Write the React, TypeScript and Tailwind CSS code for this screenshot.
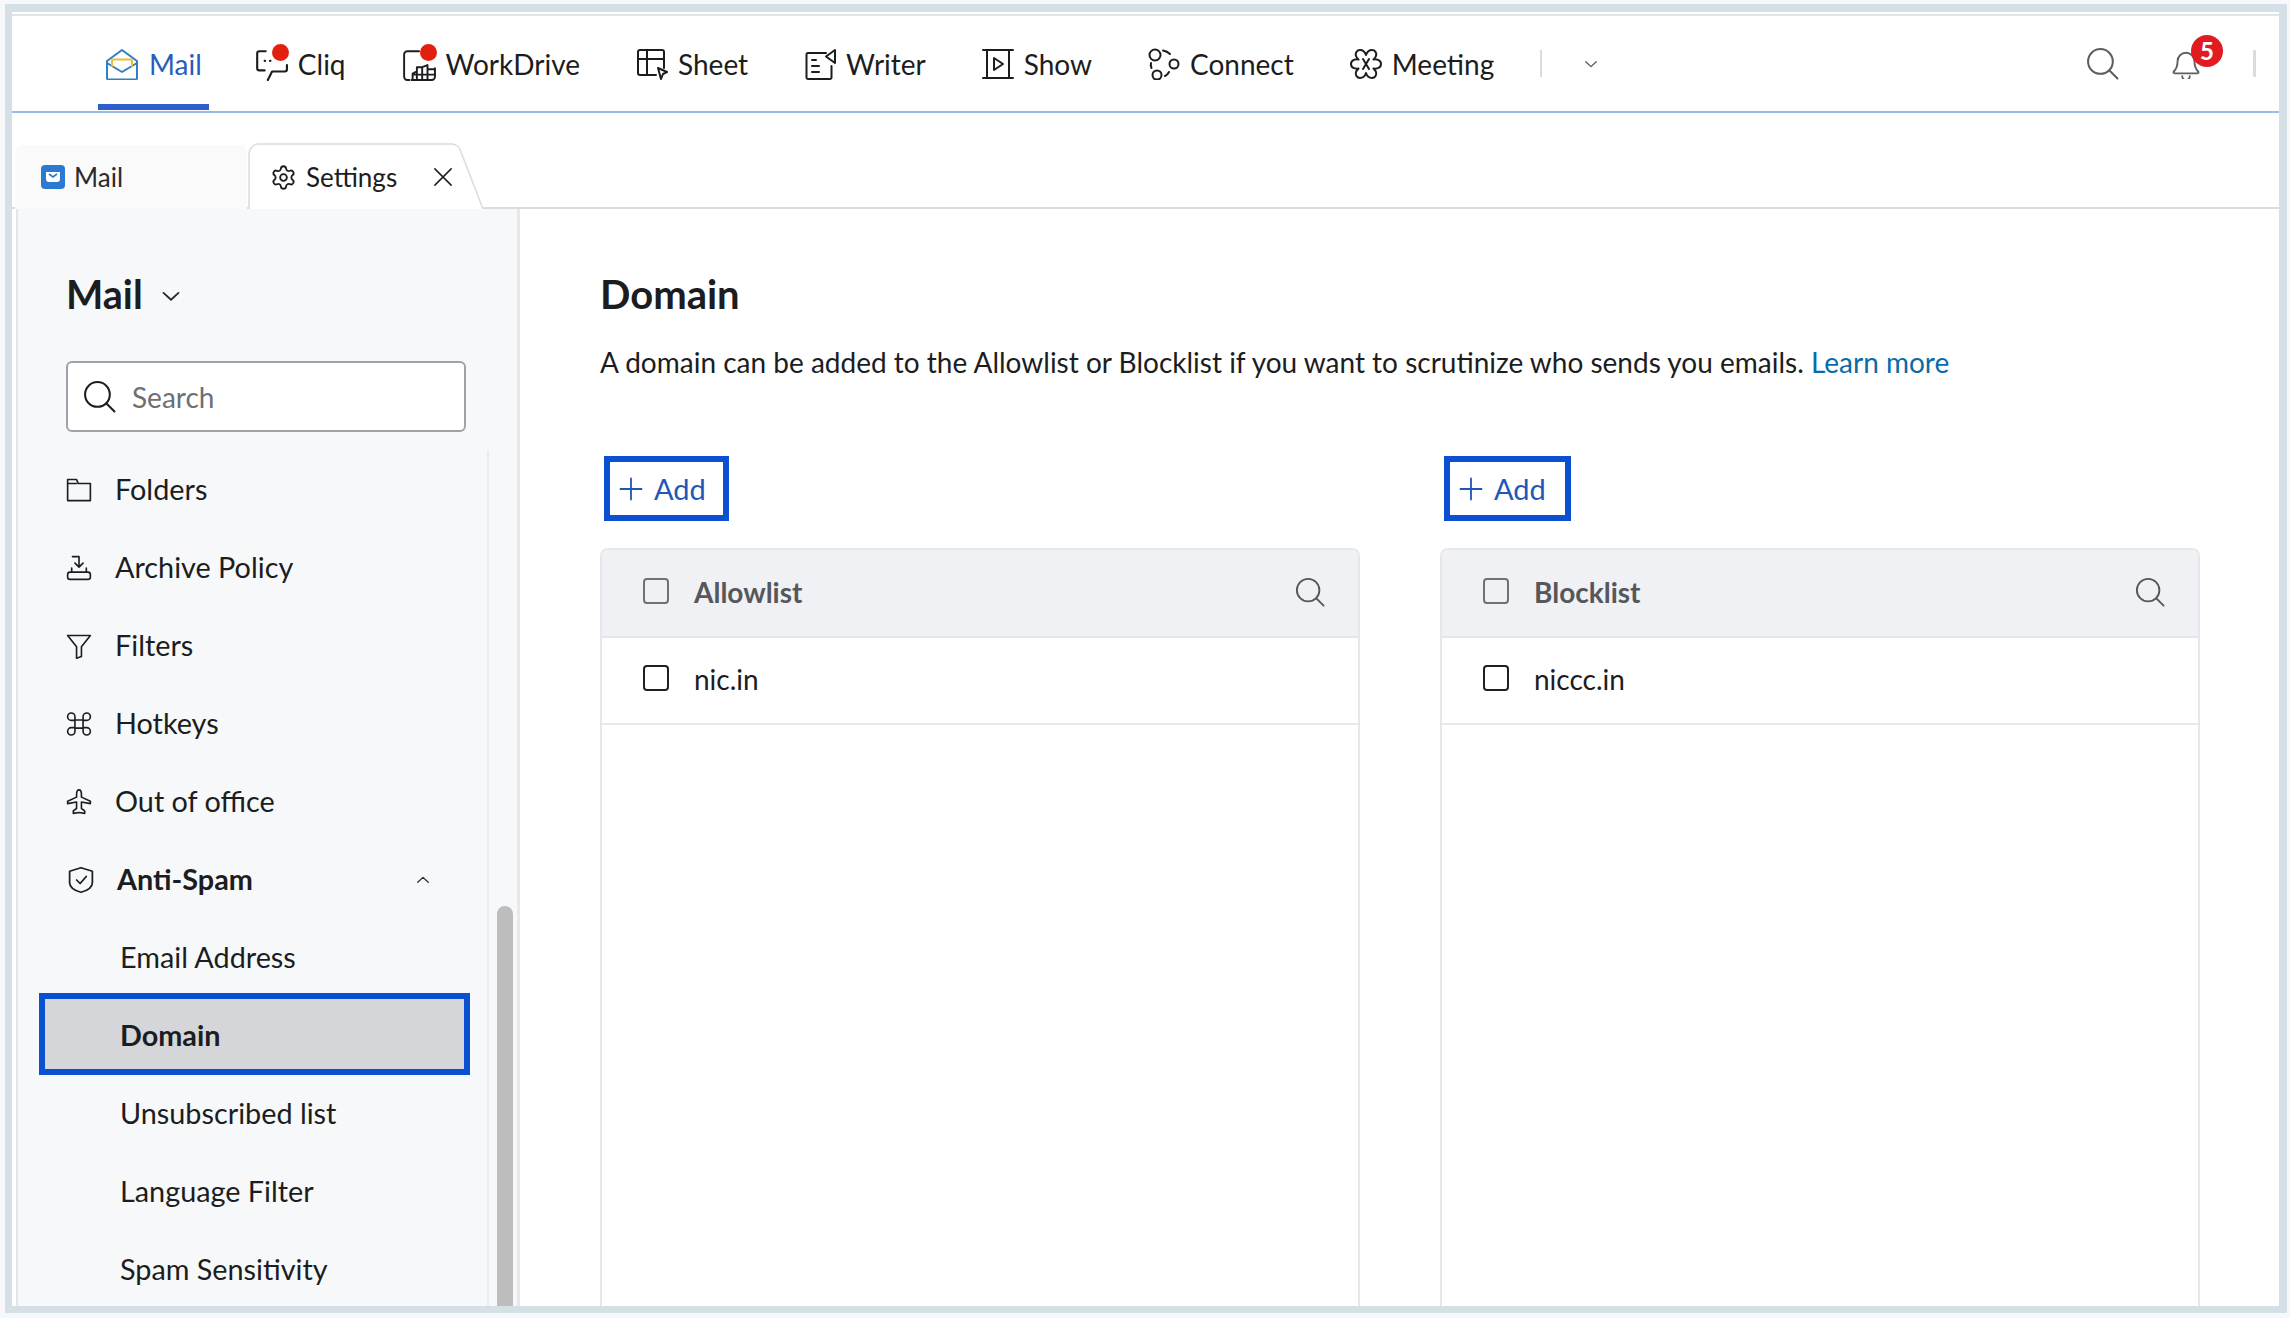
import { ReactNode } from 'react';
import { Settings } from 'lucide-react';

const Stroke = ({ size = 32, w = 2, children, className }: { size?: number; w?: number; children: ReactNode; className?: string }) => (
  <svg width={size} height={size} viewBox="0 0 32 32" fill="none" stroke="currentColor" strokeWidth={w} strokeLinecap="round" strokeLinejoin="round" className={className}>
    {children}
  </svg>
);

const SearchGlyph = ({ size = 32, className }: { size?: number; className?: string }) => (
  <Stroke size={size} className={className}>
    <circle cx="14" cy="14" r="12" />
    <path d="M23 23l7.5 7.5" />
  </Stroke>
);

const RedDot = ({ className }: { className: string }) => (
  <span className={`absolute w-[17px] h-[17px] rounded-full bg-[#e3200f] ${className}`} />
);

const apps: { name: string; icon: ReactNode }[] = [
  {
    name: 'Cliq',
    icon: (
      <span className="relative">
        <Stroke size={34}>
          <path d="M11 4H5a2 2 0 0 0-2 2v14a2 2 0 0 0 2 2h5" />
          <path d="M31 17v4a2 2 0 0 1-2 2H17l-4 8" />
          <path d="M10 13h.5M15 13h.5" />
        </Stroke>
        <RedDot className="top-[-3px] right-[-1px]" />
      </span>
    ),
  },
  {
    name: 'WorkDrive',
    icon: (
      <span className="relative">
        <Stroke size={34} w={1.800}>
          <path d="M16 4H5a3 3 0 0 0-3 3v21a3 3 0 0 0 3 3h2" />
          <path d="M31 20v8a3 3 0 0 1-3 3H9" />
          <path d="M10 31v-6l4-2v8M14 23v-4h5v12M19 19l5-2v14M24 21h7M10 26h21" />
        </Stroke>
        <RedDot className="top-[-3px] right-[-1px]" />
      </span>
    ),
  },
  {
    name: 'Sheet',
    icon: (
      <Stroke size={32}>
        <path d="M20 27H4a2 2 0 0 1-2-2V4a2 2 0 0 1 2-2h22a2 2 0 0 1 2 2v16" />
        <path d="M2 11h26M11 2v25" />
        <path d="M22 20l9 4-4 2-2 5z" />
      </Stroke>
    ),
  },
  {
    name: 'Writer',
    icon: (
      <Stroke size={32}>
        <path d="M22 5H4a1.500 1.500 0 0 0-1.500 1.500v23A1.500 1.500 0 0 0 4 31h22a1.500 1.500 0 0 0 1.500-1.500V18" />
        <path d="M31 2v13l-9-6.500z" />
        <path d="M8 12h4M8 18h7M8 24h7" />
      </Stroke>
    ),
  },
  {
    name: 'Show',
    icon: (
      <Stroke size={32}>
        <path d="M1 2h30M1 30h30M5 2v28M27 2v28" />
        <path d="M12 10l9 6-9 6z" />
      </Stroke>
    ),
  },
  {
    name: 'Connect',
    icon: (
      <Stroke size={32}>
        <circle cx="7" cy="7" r="5.500" />
        <circle cx="26" cy="16" r="4.500" />
        <circle cx="9" cy="27" r="4.500" />
        <path d="M15 2.500c3 .5 5 1.500 7 3.500M3 15c-.5 2-.2 3.500.5 5M17 28c2-1 3-2 4-4" />
      </Stroke>
    ),
  },
  {
    name: 'Meeting',
    icon: (
      <Stroke size={32}>
        <path d="M16 7c1-3 3-5 6-5s5 3 4 6c-.5 1.500-1.500 2.500-2.500 3.500C27 11 31 12 31 16s-4 5-7.500 4.500c1 1 2 2 2.500 3.500 1 3-1 6-4 6s-5-2-6-5c-1 3-3 5-6 5s-5-3-4-6c.5-1.500 1.500-2.500 2.500-3.500C5 21 1 20 1 16s4-5 7.500-4.500C7.500 10.500 6.500 9.500 6 8c-1-3 1-6 4-6s5 2 6 5z" />
        <path d="M13 11l6 10M19 11l-6 10" />
      </Stroke>
    ),
  },
];

const menu: { label: string; icon: ReactNode }[] = [
  {
    label: 'Folders',
    icon: (
      <Stroke size={26}>
        <path d="M2 29V3h11l2 5h15v21z" />
        <path d="M13 8H2" />
      </Stroke>
    ),
  },
  {
    label: 'Archive Policy',
    icon: (
      <Stroke size={26}>
        <path d="M2 24a3 3 0 0 1 3-3h22a3 3 0 0 1 3 3v3a3 3 0 0 1-3 3H5a3 3 0 0 1-3-3z" />
        <path d="M7 16v5M25 16v5" />
        <path d="M8 2h8v13M11 10l5 5 5-5" />
      </Stroke>
    ),
  },
  {
    label: 'Filters',
    icon: (
      <Stroke size={26}>
        <path d="M2 3h28L19 17v12l-6 2V17z" />
      </Stroke>
    ),
  },
  {
    label: 'Hotkeys',
    icon: (
      <Stroke size={26}>
        <path d="M11 11h10v10H11zM11 11V7a4.500 4.500 0 1 0-4.500 4.500H11M21 11V7a4.500 4.500 0 1 1 4.500 4.500H21M11 21v4a4.500 4.500 0 1 1-4.500-4.500H11M21 21v4a4.500 4.500 0 1 0 4.500-4.500H21" />
      </Stroke>
    ),
  },
  {
    label: 'Out of office',
    icon: (
      <Stroke size={26}>
        <path d="M16 1c-2 0-3 3-3 6v3L2 15v3l11-2v8l-4 3v3l7-1 7 1v-3l-4-3v-8l11 2v-3L19 10V7c0-3-1-6-3-6z" />
      </Stroke>
    ),
  },
];

const Checkbox = ({ muted }: { muted?: boolean }) => (
  <span className={`w-[26px] h-[26px] mb-[2px] shrink-0 rounded-[4px] border-[2px] ${muted ? 'border-[#6f7175]' : 'border-[#1f2024]'}`} />
);

const ListPanel = ({ title, item, addClass }: { title: string; item: string; addClass: string }) => (
  <div className="w-[760px] flex flex-col">
    <button className={`h-[65px] ml-[4px] flex items-center pl-[9px] border-[6px] border-[#0a50d0] text-[#1f56b8] text-[29px] ${addClass}`}>
      <Stroke size={24} w={2.400} className="mr-[11px]">
        <path d="M16 2v28M2 16h28" />
      </Stroke>
      Add
    </button>
    <div className="mt-[27px] flex-1 border-x-[2px] border-t-[2px] border-[#e6e7ea] rounded-t-[8px] overflow-hidden">
      <div className="h-[88px] bg-[#f0f1f4] border-b-[2px] border-[#e4e5e8] flex items-center pl-[41px] pr-[33px] pb-[2px]">
        <Checkbox muted />
        <span className="ml-[25px] flex-1 text-[28px] font-bold text-[#55575b]">{title}</span>
        <SearchGlyph size={30} className="text-[#55575b]" />
      </div>
      <div className="h-[87px] border-b-[2px] border-[#e8e9ec] flex items-center pl-[41px] pb-[3px]">
        <Checkbox />
        <span className="ml-[25px] text-[28px] text-[#1c1d20]">{item}</span>
      </div>
    </div>
  </div>
);

export default function App() {
  return (
    <div className="h-[1318px] w-[2290px] overflow-hidden bg-[#f6f8f9] pt-[4px] pl-[5px] pr-[3px] pb-[5px] font-['Lato','Open_Sans',sans-serif]">
      <div className="h-full border-[7px] border-t-[8px] border-r-[8px] border-[#d5dfe6] bg-white flex flex-col">
        <div className="h-[2px] mt-[2px] bg-[#e0e5e8]" />
        {/* app switcher */}
        <div className="h-[97px] shrink-0 flex items-center pl-[93px] pr-[23px] border-b-[2px] border-[#9ab8ea] text-[28px] text-[#1c1d20]">
          <div className="relative flex items-center gap-[10px] text-[#2a5bbd] mr-[52px]">
            <svg width="34" height="32" viewBox="0 0 34 32" fill="none" strokeWidth="2" strokeLinejoin="round" strokeLinecap="round">
              <path d="M2 13L17 2l15 11v17a1.500 1.500 0 0 1-1.500 1.500h-27A1.500 1.500 0 0 1 2 30z" stroke="#2f7fc1" />
              <path d="M2 15l15 9 15-9" stroke="#2f7fc1" />
              <path d="M7 18v-5a1.500 1.500 0 0 1 1.500-1.500h17A1.500 1.500 0 0 1 27 13v5" stroke="#f0b93a" />
            </svg>
            Mail
            <span className="absolute left-[-7px] right-[-7px] bottom-[-25px] h-[6px] bg-[#2c5fcb]" />
          </div>
          <div className="flex items-center gap-[56px]">
            {apps.map((app) => (
              <div key={app.name} className="flex items-center gap-[10px]">
                {app.icon}
                {app.name}
              </div>
            ))}
          </div>
          <span className="ml-[46px] w-[2px] h-[27px] bg-[#dcdcdc]" />
          <Stroke size={14} w={3} className="ml-[42px] text-[#55575b]">
            <path d="M4 11l12 11 12-11" />
          </Stroke>
          <SearchGlyph size={33} className="ml-auto text-[#5c5e62]" />
          <div className="relative ml-[52px] mr-[52px] text-[#5c5e62]">
            <Stroke size={30}>
              <path d="M3 24c3-3 4-6 4-11a9 9 0 0 1 18 0c0 5 1 8 4 11 1 1 0 2-1 2H4c-1 0-2-1-1-2z" />
              <path d="M12 29a4 4 0 0 0 8 0" />
            </Stroke>
            <span className="absolute top-[-14px] left-[20px] w-[32px] h-[32px] rounded-full bg-[#e01b22] text-white text-[24px] font-bold flex items-center justify-center">5</span>
          </div>
          <span className="w-[3px] h-[27px] bg-[#dcdcdc]" />
        </div>

        {/* tabs */}
        <div className="h-[96px] shrink-0 flex items-end border-b-[2px] border-[#dcdcdc] pl-[3px]">
          <div className="w-[232px] h-[64px] mb-[-2px] bg-[#fafafa] rounded-t-[8px] flex items-center pl-[26px] gap-[9px] text-[26px] text-[#2a2b2e]">
            <svg width="24" height="24" viewBox="0 0 24 24">
              <rect width="24" height="24" rx="4" fill="#2a7ad2" />
              <path d="M5 7h14v7a3 3 0 0 1-3 3H8a3 3 0 0 1-3-3z" fill="#fff" />
              <path d="M8 9l4 3 4-3" fill="none" stroke="#2a7ad2" strokeWidth="1.600" />
            </svg>
            Mail
          </div>
          <div className="relative w-[236px] shrink-0 h-[67px] mb-[-2px] ml-[1px]">
            <svg className="absolute inset-0" width="236" height="67" viewBox="0 0 236 67" fill="#fff" stroke="#dcdcdc" strokeWidth="1.500">
              <path d="M1 67V12a10 10 0 0 1 10-10h193a10 10 0 0 1 9 8l22 57" />
            </svg>
            <div className="relative h-full flex items-center pl-[22px] text-[26px] text-[#1c1d20] pt-[3px]">
              <Settings size={27} strokeWidth={1.600} className="mr-[9px]" />
              Settings
              <Stroke size={20} w={2.400} className="ml-[36px]">
                <path d="M3 3l26 26M29 3L3 29" />
              </Stroke>
            </div>
          </div>
        </div>

        <div className="flex-1 flex min-h-0 pl-[4px]">
          {/* sidebar */}
          <aside className="relative w-[504px] shrink-0 bg-[#f7f8fa] border-l-[2px] border-l-[#e3e6e8] border-r-[3px] border-r-[#e8e8ea] flex flex-col text-[#1c1d20] text-[28.8px]">
            <div className="ml-[48px] mt-[61px] h-[48px] flex items-center gap-[18px] text-[39.5px] font-bold">
              Mail
              <Stroke size={20} w={3} className="mt-[4px] text-[#2a2b2e]">
                <path d="M4 11l12 11 12-11" />
              </Stroke>
            </div>
            <div className="ml-[48px] mt-[43px] w-[400px] h-[71px] bg-white border-[2px] border-[#a0a2a9] rounded-[6px] flex items-center pl-[15px] shrink-0">
              <SearchGlyph size={33} className="text-[#1c1d20]" />
              <span className="ml-[16px] text-[#6d6f74] text-[28px]">Search</span>
            </div>
            <div className="flex-1 min-h-0 mt-[19px] mr-[28px] border-r-[2px] border-[#ececee] overflow-hidden">
              {menu.map((m) => (
                <div key={m.label} className="h-[78px] flex items-center pl-[48px] gap-[23px]">
                  {m.icon}
                  {m.label}
                </div>
              ))}
              <div className="h-[78px] flex items-center pl-[49px] font-bold">
                <Stroke size={28} className="mr-[22px]">
                  <path d="M16 2l13 4v13c0 5-6 9-13 11-7-2-13-6-13-11V6z" />
                  <path d="M11 16l4 4 7-8" />
                </Stroke>
                <span className="flex-1">Anti-Spam</span>
                <Stroke size={14} w={3} className="mr-[57px] text-[#2a2b2e]">
                  <path d="M4 21L16 10l12 11" />
                </Stroke>
              </div>
              <div className="h-[78px] flex items-center pl-[102px]">Email Address</div>
              <div className="h-[82px] ml-[21px] w-[431px] -mt-[4px] flex items-center pl-[75px] pt-[3px] bg-[#d5d6da] border-[6px] border-[#0a50d0] font-bold relative z-10">Domain</div>
              <div className="h-[78px] flex items-center pl-[102px]">Unsubscribed list</div>
              <div className="h-[78px] flex items-center pl-[102px]">Language Filter</div>
              <div className="h-[78px] flex items-center pl-[102px]">Spam Sensitivity</div>
            </div>
            {/* scrollbar */}
            <span className="absolute right-[4px] bottom-0 w-[16px] h-[400px] rounded-t-full bg-[#bdbdbd]" />
          </aside>

          {/* content */}
          <main className="flex-1 min-w-0 flex flex-col pl-[80px]">
            <h1 className="mt-[61px] h-[48px] flex items-center text-[40px] font-bold text-[#1c1d20]">Domain</h1>
            <p className="mt-[23px] text-[28px] text-[#1c1d20]">
              A domain can be added to the Allowlist or Blocklist if you want to scrutinize who sends you emails.{' '}
              <span className="text-[#0b6aa8]">Learn more</span>
            </p>
            <div className="mt-[73px] flex-1 min-h-0 flex gap-[80px]">
              <ListPanel title="Allowlist" item="nic.in" addClass="w-[125px]" />
              <ListPanel title="Blocklist" item="niccc.in" addClass="w-[127px]" />
            </div>
          </main>
        </div>
      </div>
    </div>
  );
}
